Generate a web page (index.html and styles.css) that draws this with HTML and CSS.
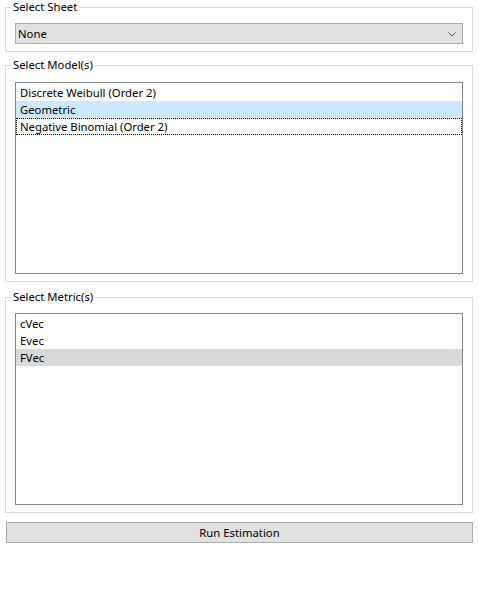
FILE: index.html
```html
<!DOCTYPE html>
<html>
<head>
<meta charset="utf-8">
<link rel="stylesheet" href="styles.css">
</head>
<body>
<div class="app">
  <fieldset class="group group-sheet">
    <legend class="group-title">Select Sheet</legend>
    <div class="combo">
      <span class="combo-text">None</span>
      <svg class="combo-arrow" width="8" height="5" viewBox="0 0 8 5"><path d="M0.5 0.5 L4 4 L7.5 0.5" fill="none" stroke="#505050" stroke-width="1"/></svg>
    </div>
  </fieldset>
  <fieldset class="group group-models">
    <legend class="group-title">Select Model(s)</legend>
    <div class="listbox listbox-models">
      <div class="item">Discrete Weibull (Order 2)</div>
      <div class="item item-selected">Geometric</div>
      <div class="item item-focus">Negative Binomial (Order 2)</div>
    </div>
  </fieldset>
  <fieldset class="group group-metrics">
    <legend class="group-title">Select Metric(s)</legend>
    <div class="listbox listbox-metrics">
      <div class="item">cVec</div>
      <div class="item">Evec</div>
      <div class="item item-inactive">FVec</div>
    </div>
  </fieldset>
  <button class="run-button">Run Estimation</button>
</div>
</body>
</html>
```

FILE: styles.css
```css
html, body {
  margin: 0;
  padding: 0;
  background: #ffffff;
}
body {
  font-family: "Noto Sans", "Open Sans", sans-serif;
  font-size: 11.3px;
  color: #000000;
}
.app {
  display: flex;
  flex-direction: column;
  padding: 0 6px 0 5px;
}
.group {
  margin: 0;
  border: 1px solid #dcdcdc;
  padding: 0 9px 7px 9px;
  min-width: 0;
}
.group-title {
  padding: 0 2px;
  margin-left: -4px;
  line-height: 14px;
  font-size: 11.3px;
}
.group-models {
  margin-top: 6px;
}
.group-metrics {
  margin-top: 8px;
}
.combo {
  margin-top: 9px;
  height: 19px;
  border: 1px solid #adadad;
  background: #e1e1e1;
  display: flex;
  align-items: center;
  justify-content: space-between;
  padding: 0 6px 0 2px;
}
.combo-text {
  line-height: 19px;
}
.combo-arrow {
  display: block;
  margin-top: 1px;
}
.listbox {
  border: 1px solid #828790;
  background: #ffffff;
  padding-top: 1px;
  box-sizing: border-box;
}
.listbox-models {
  margin-top: 10px;
  height: 192px;
}
.listbox-metrics {
  margin-top: 9px;
  height: 192px;
}
.item {
  height: 17px;
  line-height: 17px;
  padding-left: 4px;
  white-space: nowrap;
}
.item-selected {
  background: #cce8ff;
}
.item-inactive {
  background: #d9d9d9;
}
.item-focus {
  outline: 1px dotted #000000;
  outline-offset: -1px;
}
.run-button {
  margin: 9px 0 0 1px;
  height: 21px;
  width: 467px;
  border: 1px solid #adadad;
  background: #e1e1e1;
  font-family: inherit;
  font-size: 11.3px;
  color: #000000;
  padding: 0;
}
```
